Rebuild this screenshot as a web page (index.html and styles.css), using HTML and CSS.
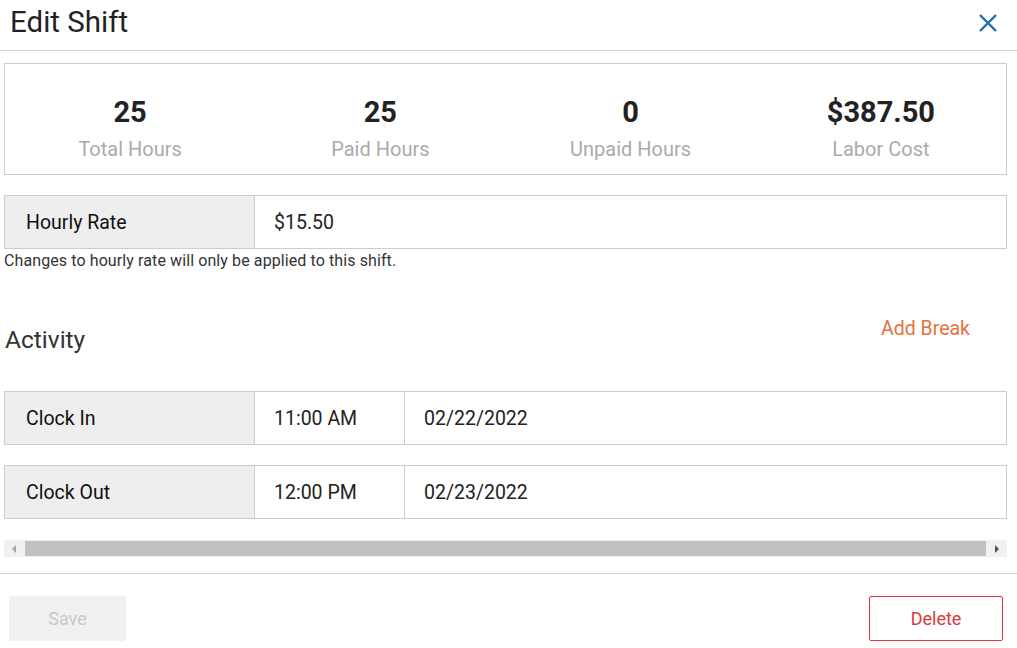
FILE: index.html
```html
<!DOCTYPE html>
<html>
	<head>
		<meta charset="utf-8" />
		<title>Edit Shift</title>
		<link rel="stylesheet" href="styles.css">
	</head>

	<body>
		<div class="modal">
			<div class="modal-head">
				<h1>Edit Shift</h1>
				<span class="close">
					<svg width="20" height="20" viewBox="0 0 20 20"><path d="M2 2L18 18M18 2L2 18" stroke="#1f6fa8" stroke-width="2.4" fill="none"/></svg>
				</span>
			</div>

			<div class="modal-body">
				<div class="stats">
					<div class="stat"><b>25</b><span>Total Hours</span></div>
					<div class="stat"><b>25</b><span>Paid Hours</span></div>
					<div class="stat"><b>0</b><span>Unpaid Hours</span></div>
					<div class="stat"><b>$387.50</b><span>Labor Cost</span></div>
				</div>

				<div class="field rate">
					<div class="cell label">Hourly Rate</div>
					<div class="cell grow">$15.50</div>
				</div>
				<p class="note">Changes to hourly rate will only be applied to this shift.</p>

				<div class="activity-head">
					<h2>Activity</h2>
					<a class="add-break">Add Break</a>
				</div>

				<div class="field">
					<div class="cell label">Clock In</div>
					<div class="cell time">11:00 AM</div>
					<div class="cell grow">02/22/2022</div>
				</div>
				<div class="field">
					<div class="cell label">Clock Out</div>
					<div class="cell time">12:00 PM</div>
					<div class="cell grow">02/23/2022</div>
				</div>

				<div class="hscroll">
					<span class="arrow left"></span>
					<span class="thumb"></span>
					<span class="arrow right"></span>
				</div>
			</div>

			<div class="modal-foot">
				<button class="btn save" disabled>Save</button>
				<button class="btn delete">Delete</button>
			</div>
		</div>
	</body>
</html>
```

FILE: styles.css
```css
* {
	padding: 0px;
	margin: 0px;
	box-sizing: border-box;
}
body {
	font-family: Roboto, "Liberation Sans", sans-serif;
	color: #222;
	background: #fff;
}
.modal {
	width: 1017px;
}
.modal-head {
	height: 51px;
	display: flex;
	align-items: center;
	justify-content: space-between;
	padding: 0 19px 6px 10px;
	border-bottom: 1px solid #cfcfcf;
}
.modal-head h1 {
	font-size: 29.5px;
	font-weight: 400;
	color: #222;
}
.close {
	display: flex;
	margin-top: 2px;
}
.modal-body {
	padding: 12px 10px 0 4px;
}
.stats {
	display: flex;
	height: 112px;
	border: 1px solid #ccc;
}
.stat {
	flex: 1;
	display: flex;
	flex-direction: column;
	align-items: center;
	padding-top: 31px;
}
.stat b {
	font-size: 29px;
	font-weight: 700;
	color: #222;
	line-height: 34px;
}
.stat span {
	font-size: 20px;
	color: #aaaaaa;
	line-height: 24px;
	margin-top: 8px;
}
.field {
	display: flex;
	height: 54px;
	border: 1px solid #ccc;
	margin-top: 20px;
	font-size: 19.5px;
}
.field .cell {
	display: flex;
	align-items: center;
	padding-left: 20px;
}
.field .label {
	width: 250px;
	background: #eeeeee;
	border-right: 1px solid #ccc;
	padding-left: 21px;
	color: #111;
}
.field .time {
	width: 150px;
	border-right: 1px solid #ccc;
	padding-left: 19px;
}
.field .grow {
	flex: 1;
	padding-left: 19px;
}
.note {
	font-size: 16px;
	letter-spacing: 0.1px;
	color: #333;
	line-height: 18px;
	margin-top: 3px;
}
.activity-head {
	display: flex;
	justify-content: space-between;
	margin-top: 48px;
	height: 73px;
}
.activity-head h2 {
	font-size: 24.5px;
	font-weight: 400;
	color: #333;
	margin-top: 8px;
	margin-left: 1px;
	line-height: 28px;
}
.add-break {
	font-size: 19.5px;
	color: #e8703f;
	margin-right: 37px;
	line-height: 22px;
}
.activity-head + .field {
	margin-top: 0;
}
.hscroll {
	display: flex;
	align-items: center;
	height: 17px;
	margin-top: 21px;
	background: #f1f1f1;
}
.thumb {
	flex: 1;
	height: 15px;
	background: #c1c1c1;
}
.arrow {
	width: 21px;
	height: 17px;
	position: relative;
}
.arrow::after {
	content: "";
	position: absolute;
	top: 5px;
	border-top: 4px solid transparent;
	border-bottom: 4px solid transparent;
}
.arrow.left::after {
	left: 8px;
	border-right: 4px solid #a3a3a3;
}
.arrow.right::after {
	left: 9px;
	border-left: 4px solid #505050;
}
.modal-foot {
	display: flex;
	justify-content: space-between;
	margin-top: 16px;
	border-top: 1px solid #cfcfcf;
	padding: 22px 14px 0 9px;
}
.btn {
	height: 45px;
	font-family: Roboto, "Liberation Sans", sans-serif;
	font-size: 18px;
	border-radius: 2px;
	background: #fff;
}
.save {
	width: 117px;
	border: none;
	background: #f0f0f0;
	color: #c8c8c8;
}
.delete {
	width: 134px;
	border: 1px solid #d93a3f;
	color: #d93a3f;
}
```
